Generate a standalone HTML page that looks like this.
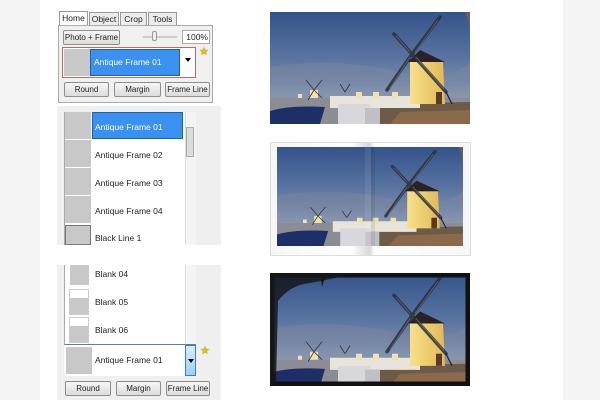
<!DOCTYPE html>
<html><head><meta charset="utf-8"><style>
*{margin:0;padding:0;box-sizing:border-box}
body{width:600px;height:400px;background:#f4f4f4;position:relative;overflow:hidden;font-family:"Liberation Sans",sans-serif;font-size:8.5px;color:#222;white-space:nowrap}
.abs{position:absolute}
.page{left:40px;top:0;width:523px;height:400px;background:#fff}
.btn{position:absolute;height:15px;border:1px solid #8e8e8e;border-radius:2px;background:linear-gradient(#f6f6f6,#dcdcdc);text-align:center;line-height:13px;font-size:8px;white-space:nowrap;overflow:hidden}
.tab{position:absolute;top:12px;height:14px;border:1px solid #999;border-bottom:none;background:#ececec;text-align:center;line-height:13px;font-size:8.5px}
.thumb{position:absolute;background:#c8c8c8}
.item{position:absolute;left:95px;font-size:8.5px}
.star{position:absolute;color:#e8c000;font-size:11px;text-shadow:0 0 1px #7a5a00}
svg.ph{position:absolute}
</style></head><body>
<div class="abs page"></div>
<svg width="0" height="0" style="position:absolute">
<defs>
<linearGradient id="sky" x1="0" y1="0" x2="0" y2="1"><stop offset="0" stop-color="#34538a"/><stop offset=".4" stop-color="#5873a0"/><stop offset=".7" stop-color="#8190ac"/><stop offset="1" stop-color="#a7a6ae"/></linearGradient>
<linearGradient id="tw" x1="0" y1="0" x2="1" y2="0"><stop offset="0" stop-color="#f7e08a"/><stop offset="1" stop-color="#e2b955"/></linearGradient>
<symbol id="photo" viewBox="0 0 200 112" preserveAspectRatio="none">
<rect width="200" height="112" fill="url(#sky)"/>
<path d="M0 55 Q60 45 120 58 T200 50 L200 66 Q100 70 0 72Z" fill="#7a86a0" opacity=".5"/>
<rect x="0" y="86" width="200" height="26" fill="#8c8c94"/>
<path d="M95 92 L200 90 L200 112 L95 112Z" fill="#6e5a48"/>
<path d="M130 100 L200 98 L200 112 L120 112Z" fill="#8a6a4a"/>
<path d="M60 84 L150 84 L150 96 L60 96Z" fill="#e8e4da"/>
<path d="M68 92 L100 92 L100 112 L68 112Z" fill="#d8d8dc"/>
<rect x="95" y="96" width="15" height="16" fill="#bfc0c6"/>
<path d="M0 99 Q20 93 55 95 L50 112 L0 112Z" fill="#1d2f66"/>
<g fill="#f3e0b0"><rect x="40" y="78" width="8" height="8"/><rect x="86" y="80" width="6" height="6"/><rect x="103" y="80" width="6" height="6"/><rect x="122" y="80" width="6" height="6"/><rect x="28" y="82" width="4" height="4"/></g>
<g stroke="#333" stroke-width=".8"><path d="M44 78 L36 68 M44 78 L52 68 M44 78 L38 88 M44 78 L52 86"/><path d="M75 80 L70 72 M75 80 L80 72"/></g>
<path d="M140 50 L173 50 L175 92 L140 92Z" fill="url(#tw)"/>
<path d="M138 50 L150 38 L175 50Z" fill="#2a2226"/>
<rect x="166" y="80" width="6" height="12" fill="#5a3a22"/>
<g stroke="#2c2f3a" stroke-width="3.5" stroke-linecap="round" opacity=".85">
<path d="M142 42 L170 5"/><path d="M142 42 L124 22"/><path d="M142 42 L117 78"/><path d="M142 42 L176 80"/>
</g>
<g stroke="#8090a8" stroke-width=".6" opacity=".7"><path d="M145 40 L168 8 M140 40 L126 24 M140 45 L120 76 M146 45 L174 77"/></g>
<path d="M176 80 L182 92" stroke="#222" stroke-width="1.2"/>
<path d="M195 0 Q199 8 200 22 L200 0Z" fill="#9a6a3a" opacity=".5"/>
</symbol>
</defs></svg>

<!-- Panel 1 -->
<div class="tab" style="left:59px;width:29px;background:#fff;height:15px;top:11px">Home</div>
<div class="tab" style="left:89px;width:30px">Object</div>
<div class="tab" style="left:120px;width:27px">Crop</div>
<div class="tab" style="left:148px;width:29px">Tools</div>
<div class="abs" style="left:58px;top:25px;width:155px;height:78px;background:#f0f0f0;border:1px solid #aaa"></div>
<div class="btn" style="left:63px;top:30px;width:57px">Photo + Frame</div>
<div class="abs" style="left:143px;top:36px;width:34px;height:2px;background:#ccc"></div>
<div class="abs" style="left:152px;top:31px;width:5px;height:10px;border:1px solid #999;background:#eee;border-radius:2px"></div>
<div class="abs" style="left:182px;top:30px;width:28px;height:14px;border:1px solid #aaa;background:#fff;font-size:8.5px;line-height:12px;text-align:right;padding-right:1px">100%</div>
<div class="abs" style="left:62px;top:47px;width:134px;height:31px;border:1px solid #b86a6a;background:#fff"></div>
<div class="thumb" style="left:64px;top:49px;width:26px;height:27px"></div>
<div class="abs" style="left:90px;top:49px;width:90px;height:27px;background:#3a91f0;border:1px solid #1f5fb8;color:#fff;font-size:8.5px;line-height:25px;padding-left:3px">Antique Frame 01</div>
<div class="abs" style="left:185px;top:58px;width:0;height:0;border-left:3px solid transparent;border-right:3px solid transparent;border-top:4px solid #000"></div>
<div class="star" style="left:199px;top:45px">★</div>
<div class="btn" style="left:64px;top:82px;width:45px">Round</div>
<div class="btn" style="left:114px;top:82px;width:47px">Margin</div>
<div class="btn" style="left:165px;top:82px;width:45px">Frame Line</div>

<!-- Panel 2 -->
<div class="abs" style="left:57px;top:106px;width:164px;height:139px;background:#efefef"></div>
<div class="abs" style="left:64px;top:112px;width:132px;height:133px;background:#fff;border-left:1px solid #aaa"></div>
<div class="abs" style="left:185px;top:112px;width:11px;height:133px;background:#f4f4f4;border-left:1px solid #ddd"></div>
<div class="abs" style="left:186px;top:127px;width:8px;height:30px;background:#dcdcdc;border:1px solid #aaa"></div>
<div class="thumb" style="left:65px;top:112px;width:26px;height:27px"></div>
<div class="abs" style="left:92px;top:112px;width:91px;height:27px;background:#3a91f0;border:1px solid #1f5fb8"></div>
<div class="item" style="top:122px;color:#fff">Antique Frame 01</div>
<div class="thumb" style="left:65px;top:140px;width:26px;height:27px"></div>
<div class="item" style="top:150px">Antique Frame 02</div>
<div class="thumb" style="left:65px;top:168px;width:26px;height:27px"></div>
<div class="item" style="top:178px">Antique Frame 03</div>
<div class="thumb" style="left:65px;top:196px;width:26px;height:27px"></div>
<div class="item" style="top:206px">Antique Frame 04</div>
<div class="thumb" style="left:65px;top:225px;width:26px;height:20px;border:1px solid #777"></div>
<div class="item" style="top:233px">Black Line 1</div>

<!-- Panel 3 -->
<div class="abs" style="left:57px;top:265px;width:164px;height:135px;background:#efefef"></div>
<div class="abs" style="left:64px;top:265px;width:132px;height:80px;background:#fff;border-left:1px solid #aaa;border-bottom:1px solid #5a7fb0"></div>
<div class="abs" style="left:185px;top:265px;width:11px;height:79px;background:#f4f4f4;border-left:1px solid #ddd"></div>
<div class="thumb" style="left:70px;top:265px;width:19px;height:20px"></div>
<div class="item" style="left:95px;top:269px">Blank 04</div>
<div class="abs" style="left:69px;top:289px;width:20px;height:26px;border:1px solid #ccc"></div>
<div class="thumb" style="left:70px;top:298px;width:18px;height:16px"></div>
<div class="item" style="left:95px;top:297px">Blank 05</div>
<div class="abs" style="left:69px;top:317px;width:20px;height:26px;border:1px solid #ccc"></div>
<div class="thumb" style="left:70px;top:326px;width:18px;height:16px"></div>
<div class="item" style="left:95px;top:325px">Blank 06</div>
<div class="abs" style="left:64px;top:345px;width:132px;height:31px;background:#fff"></div>
<div class="thumb" style="left:66px;top:347px;width:26px;height:27px"></div>
<div class="item" style="left:95px;top:355px">Antique Frame 01</div>
<div class="abs" style="left:185px;top:345px;width:11px;height:31px;background:linear-gradient(#d8ecfa,#9fd0f2);border:1px solid #3c7fb1"></div>
<div class="abs" style="left:188px;top:359px;width:0;height:0;border-left:3px solid transparent;border-right:3px solid transparent;border-top:4px solid #000"></div>
<div class="star" style="left:200px;top:344px">★</div>
<div class="btn" style="left:65px;top:381px;width:46px">Round</div>
<div class="btn" style="left:116px;top:381px;width:45px">Margin</div>
<div class="btn" style="left:166px;top:381px;width:44px">Frame Line</div>

<!-- Photos -->
<svg class="ph" style="left:270px;top:12px" width="200" height="112"><use href="#photo" width="200" height="112"/></svg>

<div class="abs" style="left:270px;top:142px;width:201px;height:114px;background:linear-gradient(90deg,#f6f6f6 0,#fff 40%,#d8d8d8 49.5%,#fff 52%,#f6f6f6 100%);border:1px solid #ddd"></div>
<svg class="ph" style="left:277px;top:147px" width="186" height="99"><use href="#photo" width="186" height="99"/>
<rect x="88" y="0" width="6" height="99" fill="#fff" opacity=".08"/>
<rect x="94" y="0" width="4" height="99" fill="#000" opacity=".08"/>
</svg>

<svg class="ph" style="left:270px;top:273px" width="200" height="113"><use href="#photo" width="200" height="113"/>
<rect x="2" y="2" width="196" height="109" fill="none" stroke="#111" stroke-width="5"/>
<path d="M0 0 L90 0 Q60 6 40 10 Q20 12 8 28 L6 110 L0 113Z" fill="#15171c" opacity=".85"/>
<path d="M50 0 L52 14 L56 0Z" fill="#15171c"/>
</svg>
</body></html>
